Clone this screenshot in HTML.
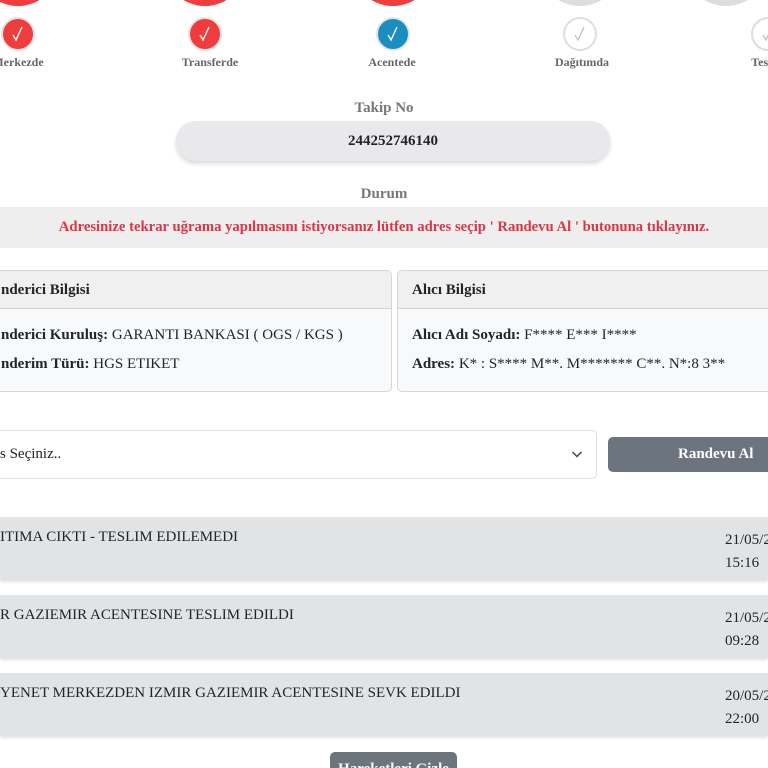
<!DOCTYPE html>
<html><head><meta charset="utf-8"><style>
*{box-sizing:border-box;margin:0;padding:0}
html,body{width:768px;height:768px;overflow:hidden}
body{background:#fff;font-family:"Liberation Serif",serif;color:#212529;position:relative}
.abs{position:absolute}
.big{position:absolute;width:84px;height:84px;border-radius:50%;top:-78px}
.chk{position:absolute;width:34px;height:34px;border-radius:50%;top:17px;border:2px solid #e4e4e4;display:flex;align-items:center;justify-content:center}
.chk.r{background:#f03c3c}.chk.b{background:#1a8fbf}.chk.g{background:#fff;border-color:#ddd}
.lbl{position:absolute;top:55px;font-size:12px;font-weight:bold;color:#666;width:120px;text-align:center}
.card{position:absolute;top:270px;height:122px;border:1px solid #d6d6d6;border-radius:5px;background:#f8f9fa;overflow:hidden}
.card .h{height:38px;background:#f0f0f0;border-bottom:1px solid #d3d3d3;font-weight:bold;font-size:15px;padding:11px 14px}
.card p{font-size:15px;padding-left:14px;position:absolute;white-space:nowrap}
.item{position:absolute;left:0;width:768px;height:63px;background:#e2e3e5;box-shadow:0 2px 3px rgba(0,0,0,.12);font-size:15px;overflow:hidden}
.item .t{position:absolute;top:12px;white-space:nowrap}
.item .d{position:absolute;left:725px;top:12px;line-height:23px;white-space:nowrap}
</style></head><body>
<div class="big" style="left:-24px;background:#f03c3c"></div>
<div class="big" style="left:163px;background:#f03c3c"></div>
<div class="big" style="left:351px;background:#f03c3c"></div>
<div class="big" style="left:538px;background:#ddd"></div>
<div class="big" style="left:684px;background:#ddd"></div>
<div class="chk r" style="left:1px"><svg width="14" height="16" viewBox="0 0 14 16"><path d="M2 9 L5 14 L11 1" fill="none" stroke="#fff" stroke-width="1.4"/></svg></div>
<div class="chk r" style="left:188px"><svg width="14" height="16" viewBox="0 0 14 16"><path d="M2 9 L5 14 L11 1" fill="none" stroke="#fff" stroke-width="1.4"/></svg></div>
<div class="chk b" style="left:376px"><svg width="14" height="16" viewBox="0 0 14 16"><path d="M2 9 L5 14 L11 1" fill="none" stroke="#fff" stroke-width="1.4"/></svg></div>
<div class="chk g" style="left:563px"><svg width="14" height="16" viewBox="0 0 14 16"><path d="M2 9 L5 14 L11 1" fill="none" stroke="#bbb" stroke-width="1.2"/></svg></div>
<div class="chk g" style="left:751px"><svg width="14" height="16" viewBox="0 0 14 16"><path d="M2 9 L5 14 L11 1" fill="none" stroke="#bbb" stroke-width="1.2"/></svg></div>
<div class="lbl" style="left:-42px">Merkezde</div>
<div class="lbl" style="left:150px">Transferde</div>
<div class="lbl" style="left:332px">Acentede</div>
<div class="lbl" style="left:522px">Dağıtımda</div>
<div class="lbl" style="left:708px">Teslim</div>
<div class="abs" style="top:100px;width:768px;text-align:center;font-weight:bold;font-size:15px;color:#777">Takip No</div>
<div class="abs" style="left:176px;top:121px;width:434px;height:40px;border-radius:20px;background:#e9e9ec;box-shadow:0 3px 5px rgba(0,0,0,.15);text-align:center;font-weight:bold;font-size:15px;line-height:40px">244252746140</div>
<div class="abs" style="top:186px;width:768px;text-align:center;font-weight:bold;font-size:15px;color:#777">Durum</div>
<div class="abs" style="left:0;top:207px;width:768px;height:41px;background:#eee;text-align:center;font-weight:bold;font-size:14.7px;line-height:41px;color:#dc3545;white-space:nowrap">Adresinize tekrar uğrama yapılmasını istiyorsanız lütfen adres seçip ' Randevu Al ' butonuna tıklayınız.</div>
<div class="card" style="left:-50px;width:442px"><div class="h" style="padding-left:50px">nderici Bilgisi</div>
<p style="top:56px;left:36px"><b>nderici Kuruluş:</b> GARANTI BANKASI ( OGS / KGS )</p>
<p style="top:85px;left:36px"><b>nderim Türü:</b> HGS ETIKET</p></div>
<div class="card" style="left:397px;width:400px"><div class="h">Alıcı Bilgisi</div>
<p style="top:56px"><b>Alıcı Adı Soyadı:</b> F**** E*** I****</p>
<p style="top:85px"><b>Adres:</b> K* : S**** M**. M******* C**. N*:8 3**</p></div>
<div class="abs" style="left:-50px;top:430px;width:647px;height:49px;border:1px solid #ddd;border-radius:5px;font-size:15px"></div>
<div class="abs" style="left:0;top:446px;font-size:15px">s Seçiniz..</div>
<svg class="abs" style="left:571px;top:449px" width="12" height="10" viewBox="0 0 12 10"><path d="M1.5 3 L6 7.5 L10.5 3" fill="none" stroke="#444" stroke-width="1.5"/></svg>
<div class="abs" style="left:608px;top:437px;width:180px;height:35px;border-radius:5px;background:#6c757d;color:#fff;font-weight:bold;font-size:15px;line-height:35px;padding-left:70px">Randevu Al</div>
<div class="item" style="top:517px"><div class="t" style="left:0">ITIMA CIKTI - TESLIM EDILEMEDI</div><div class="d">21/05/2024<br>15:16</div></div>
<div class="item" style="top:595px"><div class="t" style="left:0">R GAZIEMIR ACENTESINE TESLIM EDILDI</div><div class="d">21/05/2024<br>09:28</div></div>
<div class="item" style="top:673px"><div class="t" style="left:0">YENET MERKEZDEN IZMIR GAZIEMIR ACENTESINE SEVK EDILDI</div><div class="d">20/05/2024<br>22:00</div></div>
<div class="abs" style="left:330px;top:752px;width:127px;height:16px;overflow:hidden;border-radius:5px 5px 0 0;background:#6c757d;color:#fff;font-weight:bold;font-size:15px;text-align:center;line-height:34px">Hareketleri Gizle</div>
</body></html>
